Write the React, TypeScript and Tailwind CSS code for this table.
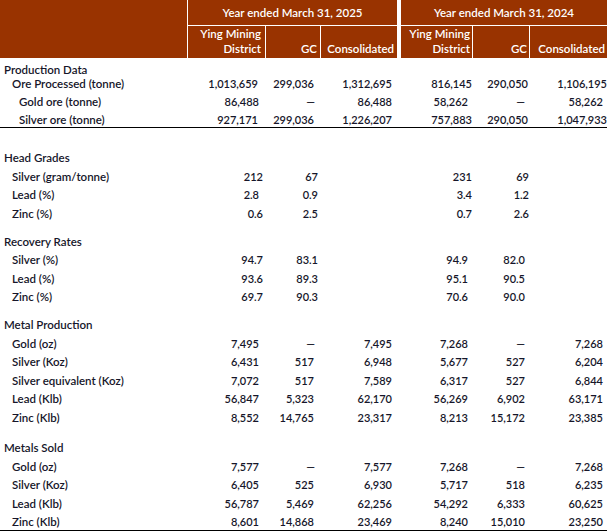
const PAD: Record<number, string> = {
  0: "pr-0",
  1: "pr-px",
  2: "pr-0.5",
  4: "pr-1",
  5: "pr-[5px]",
  6: "pr-1.5",
  7: "pr-[7px]",
};

// column widths of the body, matching the header cells
const COLS = ["w-[77px]", "w-[55px]", "w-[77px]", "w-[71px]", "w-[57px]", "w-[78px]"];

type Row = {
  label: string;
  indent?: 1 | 2;
  values?: string[];
  pads?: number[];
  head?: boolean;
  h?: string;
  className?: string;
};

const P = [7, 6, 5, 0, 1, 0];
const G = [6, 5, 5, 4, 4, 4];
const H = [2, 2, 5, 0, 0, 0];
const R = [2, 2, 5, 4, 4, 4];
const M = [6, 6, 5, 4, 4, 4];

const rows: Row[] = [
  { label: "Production Data", head: true, h: "h-[14px] mt-1" },
  { label: "Ore Processed (tonne)", indent: 1, values: ["1,013,659", "299,036", "1,312,695", "816,145", "290,050", "1,106,195"], pads: P, h: "h-[14px]" },
  { label: "Gold ore (tonne)", indent: 2, values: ["86,488", "—", "86,488", "58,262", "—", "58,262"], pads: G, h: "h-[18px] mt-0.5" },
  { label: "Silver ore (tonne)", indent: 2, values: ["927,171", "299,036", "1,226,207", "757,883", "290,050", "1,047,933"], pads: P, h: "h-[18px]", className: "border-b border-black" },

  { label: "Head Grades", head: true, className: "mt-5" },
  { label: "Silver (gram/tonne)", indent: 1, values: ["212", "67", "", "231", "69", ""], pads: H },
  { label: "Lead (%)", indent: 1, values: ["2.8", "0.9", "", "3.4", "1.2", ""], pads: [6, 2, 5, 0, 0, 0] },
  { label: "Zinc (%)", indent: 1, values: ["0.6", "2.5", "", "0.7", "2.6", ""], pads: H },

  { label: "Recovery Rates", head: true, className: "mt-[9.5px]" },
  { label: "Silver (%)", indent: 1, values: ["94.7", "83.1", "", "94.9", "82.0", ""], pads: R },
  { label: "Lead (%)", indent: 1, values: ["93.6", "89.3", "", "95.1", "90.5", ""], pads: R },
  { label: "Zinc (%)", indent: 1, values: ["69.7", "90.3", "", "70.6", "90.0", ""], pads: R },

  { label: "Metal Production", head: true, className: "mt-[9.5px]" },
  { label: "Gold (oz)", indent: 1, values: ["7,495", "—", "7,495", "7,268", "—", "7,268"], pads: [6, 5, 5, 4, 4, 4] },
  { label: "Silver (Koz)", indent: 1, values: ["6,431", "517", "6,948", "5,677", "527", "6,204"], pads: M },
  { label: "Silver equivalent (Koz)", indent: 1, values: ["7,072", "517", "7,589", "6,317", "527", "6,844"], pads: M },
  { label: "Lead (Klb)", indent: 1, values: ["56,847", "5,323", "62,170", "56,269", "6,902", "63,171"], pads: M },
  { label: "Zinc (Klb)", indent: 1, values: ["8,552", "14,765", "23,317", "8,213", "15,172", "23,385"], pads: M },

  { label: "Metals Sold", head: true, className: "mt-3" },
  { label: "Gold (oz)", indent: 1, values: ["7,577", "—", "7,577", "7,268", "—", "7,268"], pads: [6, 5, 5, 4, 4, 4] },
  { label: "Silver (Koz)", indent: 1, values: ["6,405", "525", "6,930", "5,717", "518", "6,235"], pads: M },
  { label: "Lead (Klb)", indent: 1, values: ["56,787", "5,469", "62,256", "54,292", "6,333", "60,625"], pads: M },
  { label: "Zinc (Klb)", indent: 1, values: ["8,601", "14,868", "23,469", "8,240", "15,010", "23,250"], pads: M, className: "border-b border-black" },
];

const HeaderGroup = ({ year, wide }: { year: string; wide: boolean }) => (
  <div className={`flex flex-col ${wide ? "w-[209px]" : "w-[206px]"}`}>
    <div className="h-[25px] flex items-center justify-center pt-px">Year ended March 31, {year}</div>
    <div className="h-px bg-white" />
    <div className="flex flex-1 leading-[15px]">
      <div className={`${wide ? "w-[77px] pr-1" : "w-[71px] pr-0.5"} flex flex-col justify-end items-end text-right pb-0.5`}>
        <span>Ying Mining</span>
        <span>District</span>
      </div>
      <div className="w-px bg-white" />
      <div className={`${wide ? "w-[54px] pr-[3px]" : "w-[56px] pr-0.5"} flex items-end justify-end pb-0.5`}>GC</div>
      <div className="w-px bg-white" />
      <div className={`${wide ? "w-[76px] pr-[3px]" : "w-[77px] pr-0.5"} flex items-end justify-end pb-0.5`}>Consolidated</div>
    </div>
  </div>
);

export default function App() {
  return (
    <div className="w-[610px] h-[531px] bg-white font-['Lato',sans-serif] font-semibold text-[11px] text-[#16162a] overflow-hidden">
      <div className="w-[607px]">
        <div className="flex h-[58px] bg-[#993300] text-white text-[11.5px]">
          <div className="w-[187px]" />
          <div className="w-px bg-white" />
          <HeaderGroup year="2025" wide />
          <div className="w-[4px] bg-white" />
          <HeaderGroup year="2024" wide={false} />
        </div>

        {rows.map((row, i) => (
          <div
            key={i}
            className={`flex items-center pt-[2px] leading-[14px] ${row.h ?? "h-[18.5px]"} ${row.className ?? ""}`}
          >
            <div
              className={`w-[188px] whitespace-nowrap text-[11.5px] ${
                row.head ? "pl-1" : row.indent === 2 ? "pl-[19px]" : "pl-3"
              }`}
            >
              {row.label}
            </div>
            {row.values &&
              row.values.map((v, j) => (
                <div key={j} className="contents">
                  {j === 3 && <div className="w-[4px]" />}
                  <div className={`${COLS[j]} text-right whitespace-nowrap ${PAD[row.pads?.[j] ?? 0]}`}>
                    {v}
                  </div>
                </div>
              ))}
          </div>
        ))}
      </div>
    </div>
  );
}
